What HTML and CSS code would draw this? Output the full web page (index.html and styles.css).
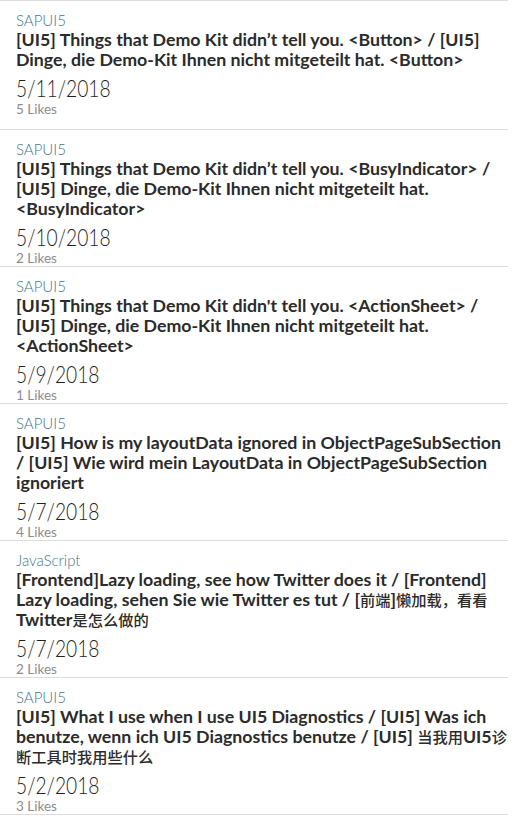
FILE: index.html
```html
<!DOCTYPE html>
<html lang="en">
<head>
<meta charset="utf-8">
<link rel="stylesheet" href="styles.css">
</head>
<body>
<div class="list">
  <div class="card card-first">
    <div class="cat">SAPUI5</div>
    <div class="title">[UI5] Things that Demo Kit didn’t tell you. &lt;Button&gt; / [UI5]<br>Dinge, die Demo-Kit Ihnen nicht mitgeteilt hat. &lt;Button&gt;</div>
    <div class="date"><span class="date-text">5/11/2018</span></div>
    <div class="likes">5 Likes</div>
  </div>
  <div class="card">
    <div class="cat">SAPUI5</div>
    <div class="title">[UI5] Things that Demo Kit didn’t tell you. &lt;BusyIndicator&gt; /<br>[UI5] Dinge, die Demo-Kit Ihnen nicht mitgeteilt hat.<br>&lt;BusyIndicator&gt;</div>
    <div class="date"><span class="date-text">5/10/2018</span></div>
    <div class="likes">2 Likes</div>
  </div>
  <div class="card">
    <div class="cat">SAPUI5</div>
    <div class="title">[UI5] Things that Demo Kit didn't tell you. &lt;ActionSheet&gt; /<br>[UI5] Dinge, die Demo-Kit Ihnen nicht mitgeteilt hat.<br>&lt;ActionSheet&gt;</div>
    <div class="date"><span class="date-text">5/9/2018</span></div>
    <div class="likes">1 Likes</div>
  </div>
  <div class="card">
    <div class="cat">SAPUI5</div>
    <div class="title">[UI5] How is my layoutData ignored in ObjectPageSubSection<br>/ [UI5] Wie wird mein LayoutData in ObjectPageSubSection<br>ignoriert</div>
    <div class="date"><span class="date-text">5/7/2018</span></div>
    <div class="likes">4 Likes</div>
  </div>
  <div class="card">
    <div class="cat">JavaScript</div>
    <div class="title">[Frontend]Lazy loading, see how Twitter does it / [Frontend]<br>Lazy loading, sehen Sie wie Twitter es tut / [<span class="cjk">前端</span>]<span class="cjk">懒加载，看看</span><br>Twitter<span class="cjk">是怎么做的</span></div>
    <div class="date"><span class="date-text">5/7/2018</span></div>
    <div class="likes">2 Likes</div>
  </div>
  <div class="card">
    <div class="cat">SAPUI5</div>
    <div class="title">[UI5] What I use when I use UI5 Diagnostics / [UI5] Was ich<br>benutze, wenn ich UI5 Diagnostics benutze / [UI5] <span class="cjk">当我用</span>UI5<span class="cjk">诊</span><br><span class="cjk">断工具时我用些什么</span></div>
    <div class="date"><span class="date-text">5/2/2018</span></div>
    <div class="likes">3 Likes</div>
  </div>
</div>
</body>
</html>
```

FILE: styles.css
```css
html, body {
  margin: 0;
  padding: 0;
  background: #ffffff;
}
body {
  font-family: Lato, "Noto Sans CJK SC", sans-serif;
  color: #2a2a2a;
}
.list {
  width: 508px;
  border-top: 1px solid #dcdcdc;
}
.card {
  box-sizing: border-box;
  height: 137px;
  padding: 10px 0 0 16px;
  border-bottom: 1px solid #dcdcdc;
  overflow: hidden;
}
.card-first {
  height: 129px;
}
.cat {
  font-size: 15px;
  line-height: 18px;
  font-weight: 300;
  color: #3f7890;
}
.title {
  font-size: 17.75px;
  line-height: 20px;
  font-weight: 700;
  color: #2b2b2b;
  white-space: nowrap;
}
.cjk {
  font-family: "Noto Sans CJK SC", sans-serif;
  font-size: 15.25px;
  line-height: 1;
  font-weight: 500;
}
.date {
  margin-top: 6px;
  font-size: 24px;
  line-height: 26px;
  font-weight: 300;
  color: #1f1f1f;
}
.date-text {
  display: inline-block;
  transform: scaleX(0.8);
  transform-origin: left center;
}
.likes {
  font-size: 13.5px;
  line-height: 16px;
  font-weight: 400;
  color: #8c8c8c;
}
```
